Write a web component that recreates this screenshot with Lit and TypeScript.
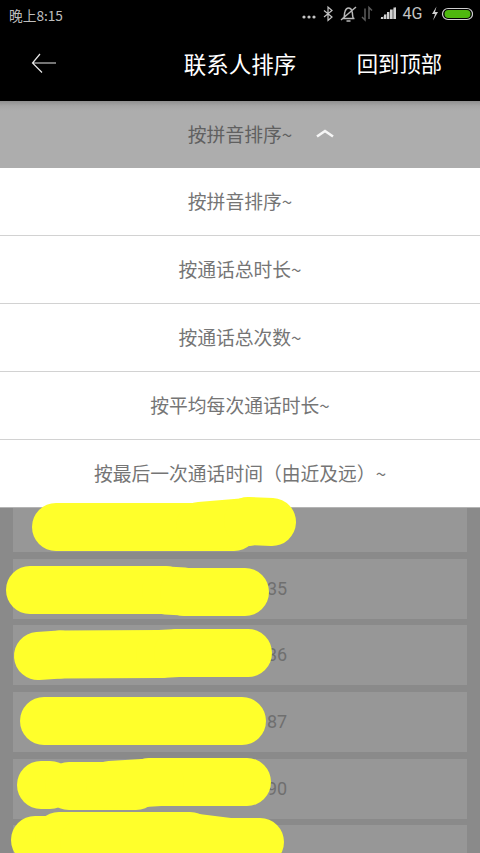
import { LitElement, html, css, svg } from "lit";
import { customElement } from "lit/decorators.js";

const MENU = ["按拼音排序~", "按通话总时长~", "按通话总次数~", "按平均每次通话时长~", "按最后一次通话时间（由近及远）~"];
const ROWS = ["", "35", "36", "87", "90", ""];
const STROKES: [number, number, number, number][] = [
  [56, 527, 234, 527], [200, 526, 248, 522], [248, 521, 272, 522],
  [30, 590, 166, 590], [166, 590.500, 184, 591.500], [184, 592, 245, 592],
  [38, 656, 60, 654.500], [60, 654.500, 160, 654], [160, 654, 178, 653], [178, 653, 248, 653],
  [44, 721, 242, 721],
  [41, 785, 50, 785], [69, 786, 136, 786], [149, 782, 247, 782], [110, 785, 160, 782],
  [35, 840, 180, 840], [59, 836, 190, 836], [190, 837, 230, 842], [84, 842, 260, 842],
];

@customElement("app-root")
export class AppRoot extends LitElement {
  static styles = css`
    :host { display: block; position: relative; width: 480px; height: 853px; overflow: hidden; background: #8a8a8a;
      font-family: "Noto Sans CJK SC", "Noto Sans", sans-serif; }
    .top { background: #000; height: 101px; display: flex; flex-direction: column; }
    .status { height: 30px; display: flex; align-items: center; justify-content: space-between; padding: 0 7px 0 9px; color: #bdbdbd; font-size: 13.7px; }
    .status .time { line-height: 30px; }
    .status svg { display: block; }
    .nav { flex: 1; display: grid; grid-template-columns: 1fr auto 1fr; align-items: center; color: #fff; padding-bottom: 6px; }
    .nav svg { display: block; margin-left: 30px; }
    .title { font-size: 22.5px; line-height: 30px; }
    .action { font-size: 21.3px; line-height: 30px; justify-self: end; padding-right: 38px; }
    .sortbar { box-sizing: border-box; height: 66.5px; padding-bottom: 2px; display: grid; grid-template-columns: 1fr auto 1fr; align-items: center; color: #606060; font-size: 18.8px;
      background: linear-gradient(#8f8f8f 0, #a6a6a6 5px, #adadad 10px); }
    .sortbar span { grid-column: 2; }
    .sortbar svg { display: block; margin-left: 24px; margin-top: 1px; }
    .menu { background: #fff; }
    .item { box-sizing: border-box; height: 68px; padding-bottom: 2px; display: flex; align-items: center; justify-content: center; color: #757575; font-size: 18.8px; border-bottom: 1px solid #d2d2d2; }
    .item:last-child { border-bottom-color: #b4b4b4; }
    .list { padding: 0 13px; display: flex; flex-direction: column; gap: 6.67px; }
    .row { height: 60px; flex: none; background: #979797; color: #6f6f6f; font: 18px/60px Roboto, sans-serif; padding-left: 254px; }
    .row:first-child { height: 44.5px; }
    .scribble { position: absolute; left: 0; top: 0; pointer-events: none; }
  `;

  render() {
    return html`
      <div class="top">
        <div class="status">
          <span class="time">晚上8:15</span>
          <svg width="171" height="30" viewBox="302 0 171 30" fill="none">
            <g fill="#c4c4c4">
              <circle cx="304" cy="17" r="1.6"/><circle cx="309" cy="17" r="1.6"/><circle cx="314" cy="17" r="1.6"/>
            </g>
            <path d="M324 10.5l8 6.5-4 3.5V7l4 3.5-8 6.5" stroke="#c4c4c4" stroke-width="1.2"/>
            <path d="M342 18.500h12.500M343.500 18.500c1.500-2 .5-4.500 1.500-7 .8-2.500 2.500-3.500 3.500-3.500s3 1 3.500 3.500c1 2.500 0 5 1.500 7M346.500 21h4M341 20L356 7" stroke="#b8b8b8" stroke-width="1.500"/>
            <path d="M365 8.500V20l-3-3M369 19V7.500l3 3" stroke="#5c5c5c" stroke-width="1.500"/>
            <path d="M380 19l16-12v12z" fill="#5a5a5a"/>
            <path d="M381 19h2v-2h-2zM384 19h2v-4.500h-2zM387 19h2v-7h-2zM390 19h2.500v-9.500H390zM393.500 19h2.500V7.500h-2.500z" fill="#d0d0d0"/>
            <text x="402.500" y="19" font-family="Roboto, sans-serif" font-size="16" fill="#c4c4c4">4G</text>
            <path d="M436.500 6.500l-4.500 7.500h3l-2 6.500 5-8.500h-3z" fill="#cfcfcf"/>
            <rect x="442.500" y="8.500" width="30" height="11" rx="5.500" stroke="#cfcfcf" stroke-width="1.200"/>
            <rect x="444.500" y="10" width="26" height="8" rx="4" fill="#4fb80f"/>
          </svg>
        </div>
        <div class="nav">
          <svg width="28" height="22" viewBox="0 0 28 22" fill="none" stroke="#e8e8e8" stroke-width="1.200">
            <path d="M2.500 11H26M10 2L2.500 11l9.500 9.500"/>
          </svg>
          <span class="title">联系人排序</span>
          <span class="action">回到顶部</span>
        </div>
      </div>
      <div class="sortbar">
        <span>按拼音排序~</span>
        <svg width="18" height="9" viewBox="0 0 18 9" fill="none" stroke="#f6f6f6" stroke-width="2.600"><path d="M1 7.500l8-5.500 8 5.500"/></svg>
      </div>
      <div class="menu">${MENU.map((m) => html`<div class="item">${m}</div>`)}</div>
      <div class="list">${ROWS.map((r) => html`<div class="row">${r}</div>`)}</div>
      <svg class="scribble" width="480" height="853" viewBox="0 0 480 853" fill="none" stroke="#ffff2b" stroke-width="48" stroke-linecap="round">
        ${STROKES.map(([a, b, c, d]) => svg`<line x1=${a} y1=${b} x2=${c} y2=${d}></line>`)}
      </svg>
    `;
  }
}
